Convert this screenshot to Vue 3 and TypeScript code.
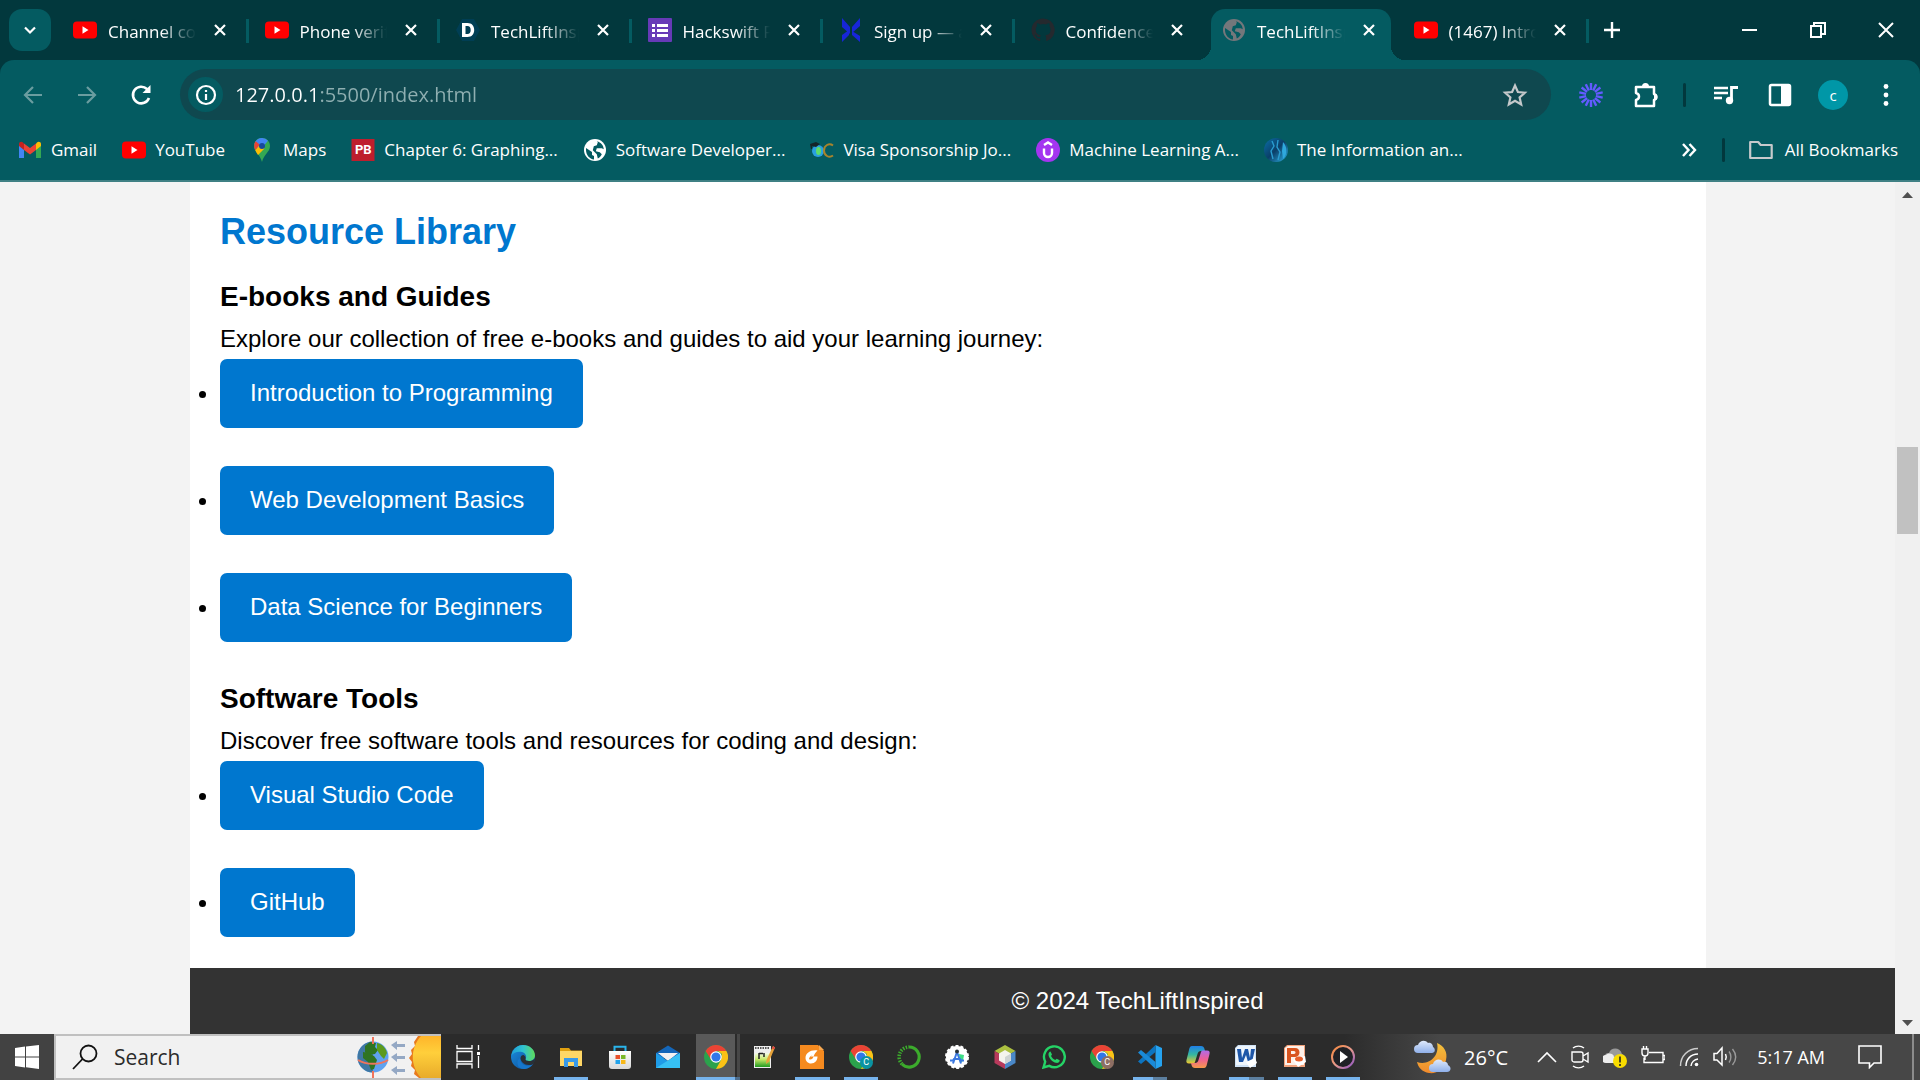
<script setup lang="ts">
import { ref } from 'vue'

interface Tab { icon: string; title: string; active?: boolean; bare?: boolean }
interface Bookmark { icon: string; label: string; letters?: string }
interface Section { title: string; intro: string; links: string[] }
interface App { icon: string; name: string; state?: 'open' | 'grouped' | 'current'; badge?: 'teal' | 'brown' }

const tabs: Tab[] = [
  { icon: 'youtube', title: 'Channel content' },
  { icon: 'youtube', title: 'Phone verification' },
  { icon: 'devpost', title: 'TechLiftInspired' },
  { icon: 'forms', title: 'Hackswift Form' },
  { icon: 'crossmark', title: 'Sign up — account' },
  { icon: 'github', title: 'Confidence-tech', bare: true },
  { icon: 'globe-dim', title: 'TechLiftInspired', active: true, bare: true },
  { icon: 'youtube', title: '(1467) Introduction' },
]

const bookmarks: Bookmark[] = [
  { icon: 'gmail', label: 'Gmail' },
  { icon: 'youtube', label: 'YouTube' },
  { icon: 'maps', label: 'Maps' },
  { icon: 'pb', label: 'Chapter 6: Graphing...', letters: 'PB' },
  { icon: 'globe', label: 'Software Developer...' },
  { icon: 'visa', label: 'Visa Sponsorship Jo...' },
  { icon: 'udemy', label: 'Machine Learning A...' },
  { icon: 'info-tech', label: 'The Information an...' },
]

const sections: Section[] = [
  {
    title: 'E-books and Guides',
    intro: 'Explore our collection of free e-books and guides to aid your learning journey:',
    links: ['Introduction to Programming', 'Web Development Basics', 'Data Science for Beginners'],
  },
  {
    title: 'Software Tools',
    intro: 'Discover free software tools and resources for coding and design:',
    links: ['Visual Studio Code', 'GitHub'],
  },
]

const apps: App[] = [
  { icon: 'edge', name: 'Edge' },
  { icon: 'explorer', name: 'File Explorer', state: 'open' },
  { icon: 'store', name: 'Store' },
  { icon: 'mail', name: 'Mail' },
  { icon: 'chrome', name: 'Chrome', state: 'current' },
  { icon: 'notepad', name: 'Notepad++' },
  { icon: 'foxit', name: 'PDF Reader', state: 'open' },
  { icon: 'chrome', name: 'Chrome profile', state: 'open', badge: 'teal' },
  { icon: 'anaconda', name: 'Anaconda' },
  { icon: 'studio', name: 'Android Studio' },
  { icon: 'netbeans', name: 'NetBeans' },
  { icon: 'whatsapp', name: 'WhatsApp' },
  { icon: 'chrome', name: 'Chrome second profile', badge: 'brown' },
  { icon: 'vscode', name: 'VS Code', state: 'grouped' },
  { icon: 'copilot', name: 'Copilot' },
  { icon: 'word', name: 'Word', state: 'grouped' },
  { icon: 'powerpoint', name: 'PowerPoint', state: 'open' },
  { icon: 'player', name: 'Media Player', state: 'open' },
]

const address = ref('127.0.0.1:5500/index.html')
const query = ref('')
</script>

<template>
  <div class="screen">
    <svg class="sprite" aria-hidden="true">
      <defs>
        <linearGradient id="edge-a" x1="0" y1="0" x2="1" y2="0"><stop offset="0" stop-color="#1f9fd8" /><stop offset=".5" stop-color="#30c2d0" /><stop offset="1" stop-color="#5fdc5a" /></linearGradient>
        <linearGradient id="edge-b" x1="0" y1="0" x2="1" y2="1"><stop offset="0" stop-color="#1b8fe0" /><stop offset="1" stop-color="#0c4a94" /></linearGradient>
        <linearGradient id="bag" x1="0" y1="0" x2="0" y2="1"><stop offset="0" stop-color="#fff" /><stop offset="1" stop-color="#d8d8d8" /></linearGradient>
        <linearGradient id="sun" x1="0" y1="0" x2="0" y2="1"><stop offset="0" stop-color="#ffb52a" /><stop offset=".4" stop-color="#ffcf3b" /><stop offset="1" stop-color="#e8ab2a" /></linearGradient>
        <linearGradient id="moon" x1="0" y1="0" x2="0" y2="1"><stop offset="0" stop-color="#f3c13c" /><stop offset="1" stop-color="#f08a2c" /></linearGradient>
        <linearGradient id="cloud" x1="0" y1="0" x2="0" y2="1"><stop offset="0" stop-color="#dfe9fb" /><stop offset="1" stop-color="#8fb0ea" /></linearGradient>
        <linearGradient id="ring" x1="0" y1="0" x2="1" y2="1"><stop offset="0" stop-color="#f5883c" /><stop offset=".5" stop-color="#e79a8a" /><stop offset="1" stop-color="#8a52c8" /></linearGradient>
        <linearGradient id="cop-a" x1="0" y1="0" x2="0" y2="1"><stop offset="0" stop-color="#1f7fe8" /><stop offset=".5" stop-color="#35b8a0" /><stop offset="1" stop-color="#f0c82c" /></linearGradient>
        <linearGradient id="cop-b" x1="0" y1="0" x2="0" y2="1"><stop offset="0" stop-color="#b06be8" /><stop offset=".5" stop-color="#ee5f95" /><stop offset="1" stop-color="#f79a4a" /></linearGradient>
        <linearGradient id="npp" x1="0" y1="0" x2="0" y2="1"><stop offset="0" stop-color="#f4faea" /><stop offset=".45" stop-color="#c8ea6a" /><stop offset="1" stop-color="#1f9a1f" /></linearGradient>
        <linearGradient id="orb" x1="0" y1="0" x2="1" y2="1"><stop offset="0" stop-color="#0a6fa8" /><stop offset=".5" stop-color="#0b3f68" /><stop offset="1" stop-color="#2fb4e8" /></linearGradient>
      </defs>
      <symbol id="youtube" viewBox="0 0 24 24"><rect y="3.5" width="24" height="17" rx="4" fill="#f00" /><path d="M9.5 8.3v7.4l6-3.7z" fill="#fff" /></symbol>
      <symbol id="devpost" viewBox="0 0 24 24"><path d="M6 1h12l6 11-6 11H6L0 12z" fill="#003e54" /><path fill-rule="evenodd" d="M6 5h5.500c4.300 0 6.700 2.800 6.700 7s-2.400 7-6.700 7H6zm3.500 3v8h2c2 0 3.200-1.500 3.200-4s-1.200-4-3.200-4z" fill="#fff" /></symbol>
      <symbol id="forms" viewBox="0 0 24 24"><rect width="24" height="24" rx="1" fill="#673ab7" /><path d="M4 6h3v3H4zm5 0h11v3H9zM4 11h3v3H4zm5 0h11v3H9zM4 16h3v3H4zm5 0h11v3H9z" fill="#fff" /></symbol>
      <symbol id="crossmark" viewBox="0 0 24 24"><path d="M3 0l8 9v7L3 9zM21 0v8l-8 7V9zM3 24v-7l7-5v5zM21 24l-8-7v-4l8 5z" fill="#1726d8" /></symbol>
      <symbol id="github" viewBox="0 0 24 24"><path d="M12 .5C5.600.5.500 5.700.500 12c0 5.100 3.300 9.400 7.900 10.900.600.100.800-.200.800-.5v-2c-3.200.7-3.900-1.500-3.900-1.500-.5-1.300-1.300-1.700-1.300-1.700-1-.7.100-.7.100-.7 1.200.1 1.800 1.200 1.800 1.200 1 1.800 2.700 1.300 3.400 1 .1-.8.400-1.300.7-1.600-2.600-.3-5.200-1.300-5.200-5.700 0-1.300.4-2.300 1.200-3.100-.1-.3-.5-1.500.1-3.100 0 0 1-.3 3.200 1.200a11 11 0 0 1 5.800 0c2.200-1.500 3.200-1.200 3.200-1.200.6 1.600.2 2.800.1 3.100.7.800 1.200 1.800 1.200 3.100 0 4.400-2.700 5.400-5.300 5.700.4.400.8 1.100.8 2.100v3.200c0 .3.200.7.800.5A11.500 11.500 0 0 0 12 .5z" fill="#24292e" /></symbol>
      <symbol id="globe" viewBox="0 0 24 24"><circle cx="12" cy="12" r="11" fill="#fff" /><path d="M3 10l6 4v3l2 1v3.500C6.500 21 3 17 3 12zM14 3.200c4 1 6.500 4.300 6.800 8l-2-1h-5l-1 3 4 1 2 2c-.8 2-2.200 3.300-4 4.200l-1-4.200-4-4 1-4 3-1 1-3z" fill="#045b61" /></symbol>
      <symbol id="globe-dim" viewBox="0 0 24 24"><circle cx="12" cy="12" r="11" fill="#74777b" /><path d="M3 10l6 4v3l2 1v3.500C6.500 21 3 17 3 12zM14 3.200c4 1 6.500 4.300 6.800 8l-2-1h-5l-1 3 4 1 2 2c-.8 2-2.200 3.300-4 4.200l-1-4.200-4-4 1-4 3-1 1-3z" fill="#045b61" /></symbol>
      <symbol id="gmail" viewBox="0 0 24 24"><path d="M1 6v14h5V11z" fill="#4285f4" /><path d="M18 11v9h5V6z" fill="#34a853" /><path d="M18 5.500V12l5-4V6c0-2-2.500-3-4-1.500z" fill="#fbbc04" /><path d="M1 6v2l5 4V5.500L5 4.500C3.500 3 1 4 1 6z" fill="#c5221f" /><path d="M6 5.500L12 10l6-4.500V12l-6 4.500L6 12z" fill="#ea4335" /></symbol>
      <symbol id="maps" viewBox="0 0 24 24"><path d="M12 0c4.500 0 8 3.500 8 8 0 6-6 8-8 16-2-8-8-10-8-16 0-4.500 3.500-8 8-8z" fill="#34a853" /><path d="M5.500 3.500A8 8 0 0 1 18 2.700L9.500 12.500 4.500 6z" fill="#4285f4" /><path d="M5.800 3.200l4 3.600-4.500 5.400C4 10 3.500 6 5.800 3.200z" fill="#ea4335" /><path d="M14.500 10.500L8 17c-1-1.700-2-3-2.700-4.800l4.500-5.300z" fill="#fbbc04" /><circle cx="12" cy="8" r="3" fill="#174a9c" /></symbol>
      <symbol id="pb" viewBox="0 0 24 24"><rect x=".5" y="1" width="23" height="22" fill="#be1e2d" /></symbol>
      <symbol id="visa" viewBox="0 0 24 24"><circle cx="8" cy="13" r="6" fill="#2a9fe0" /><ellipse cx="8.500" cy="13" rx="2.500" ry="4" fill="#5ddc6a" /><path d="M0 6l6-2 4 2-4 3-4-1v3H1z" fill="#152428" /><path d="M23 7.500c-4-3-9 0-9 5s5 8 9 5" fill="none" stroke="#a8842c" stroke-width="2" /></symbol>
      <symbol id="udemy" viewBox="0 0 24 24"><circle cx="12" cy="12" r="12" fill="#a435f0" /><path d="M8 10.500v4.500a4 4 0 0 0 8 0v-4.500M8 7L12 4.500 16 7" fill="none" stroke="#fff" stroke-width="2.400" /></symbol>
      <symbol id="info-tech" viewBox="0 0 24 24"><circle cx="12" cy="12" r="12" fill="url(#orb)" /><path d="M8 3l2 5-3 5 2 8M14 2l-1 7 3 5-2 8" fill="none" stroke="#2a9cd0" stroke-width="1.400" /><path d="M19 4c4 4 5 12 0 17l-1-8z" fill="#2fa8dc" /></symbol>
      <symbol id="x" viewBox="0 0 24 24"><path d="M7 7l10 10M17 7L7 17" stroke="#fff" stroke-width="2.200" /></symbol>

      <symbol id="edge" viewBox="0 0 24 24"><circle cx="12" cy="12" r="12" fill="url(#edge-b)" /><path d="M1 8C3 3 7 0 12 0c7 0 12 5 12 10.500 0 3.500-3 5.500-6 5.500-2.500 0-4-1-3.500-2 1.500-2 .5-6-3.500-7C6 6 2.500 8 .5 10.500z" fill="url(#edge-a)" /><path d="M9 13c0 5 4 8 9 7.500 2 0 3.500-1 4.500-2-2 3.500-6 5.500-10 5.500-4.500 0-6.500-4-6-7 .3-2 1.300-3.500 2.500-4z" fill="#1676cc" /><path d="M14.500 14c-.5 1 1 2 3.500 2s4-.5 6-2.500c-.3 2.500-1 4-1.500 5-1 1-2.500 1.500-4.500 1.500-5 0-8-3-8.500-6.500C9.500 11 11 10 12.500 10c1.500 1 2.500 2.500 2 4z" fill="#2a2f36" /></symbol>
      <symbol id="explorer" viewBox="0 0 24 24"><path d="M1 3h9l2 2.500h11v6H1z" fill="#e0a010" /><rect x="1" y="6" width="22" height="15" fill="#ffd766" /><path d="M5 22v-9h14v9h-4v-5H9v5z" fill="#3a9ae8" /></symbol>
      <symbol id="store" viewBox="0 0 24 24"><path d="M6.500 8V1.800h11V8" fill="none" stroke="#2ab4ea" stroke-width="2" /><path d="M1 6h22v15a3 3 0 0 1-3 3H4a3 3 0 0 1-3-3z" fill="url(#bag)" /><path d="M7.500 10H12v4H7.500z" fill="#e8502a" /><path d="M13 10h4.500v4H13z" fill="#7ab829" /><path d="M7.500 15H12v4H7.500z" fill="#22a2ea" /><path d="M13 15h4.500v4H13z" fill="#f8b818" /></symbol>
      <symbol id="mail" viewBox="0 0 24 24"><path d="M0 8l12-7.500L24 8v5H0z" fill="#1466b8" /><path d="M2 8h20l-10 8z" fill="#f2f2f2" /><path d="M0 8l12 8L24 8v15H0z" fill="#1f9ce8" /><path d="M0 23l24-15v15z" fill="#36c0f4" /></symbol>
      <symbol id="chrome" viewBox="0 0 24 24"><circle cx="12" cy="12" r="12" fill="#2ba24c" /><path d="M1.600 6A12 12 0 0 1 22.400 6H12L7 14.500z" fill="#ea4335" /><path d="M22.400 6A12 12 0 0 1 12 24l5-9 1-6-4-3z" fill="#fbc116" /><circle cx="12" cy="12" r="5.800" fill="#fff" /><circle cx="12" cy="12" r="4.600" fill="#3077e8" /></symbol>
      <symbol id="notepad" viewBox="0 0 24 24"><path d="M2 1h17v22H2z" fill="#eee" /><path d="M3 8h15v14H3z" fill="url(#npp)" /><path d="M3 3h15" stroke="#555" stroke-width="2" stroke-dasharray="1.500 1" /><path d="M7 14V8M7 8.500h4M12 8v4" stroke="#222" stroke-width="1.500" fill="none" /><path d="M21 1l2 1.500-6 14-3 2.500.5-4z" fill="#e8a33a" /><path d="M21 1l2 1.500-1 2-2-1z" fill="#d44" /></symbol>
      <symbol id="foxit" viewBox="0 0 24 24"><path d="M0 0h18l6 6v18H0z" fill="#f58a1f" /><path d="M19 0l5 5h-5z" fill="#f8a850" /><path fill-rule="evenodd" d="M17.500 5.500C11 4.500 5.500 8 5.500 13c0 3 2.500 5.500 5.500 5.500 4 0 6.500-3 6.500-7h-4c1-2.500 2-4 4-6zM12.500 10c-2 1-3.500 2.500-3.500 4 1.500 1.500 4 0 4.500-2.500h-3z" fill="#fff" /></symbol>
      <symbol id="anaconda" viewBox="0 0 24 24"><path d="M12 2A10 10 0 1 1 5 19" fill="none" stroke="#3cab2c" stroke-width="3.200" /><path d="M5 19A10 10 0 0 1 12 2" fill="none" stroke="#3cab2c" stroke-width="3.600" stroke-dasharray="1.500 1.300" /></symbol>
      <symbol id="studio" viewBox="0 0 24 24"><circle cx="12" cy="12" r="11" fill="#fff" stroke="#fff" stroke-width="2" stroke-dasharray="3 2" /><path d="M14 9l5 1-1 6-3 2z" fill="#3ddc84" /><path d="M5 15.500h3l1-1.500h6l1 1.500h3M12 7L8 18.500M12 7l4 11.500" stroke="#3b78e0" stroke-width="2" fill="none" /><circle cx="12" cy="6.500" r="2" fill="#263238" /></symbol>
      <symbol id="netbeans" viewBox="0 0 24 24"><path d="M12 0l10.500 6L12 12 1.500 6z" fill="#acc040" /><path d="M1.500 6L12 12v12L1.500 18z" fill="#b83a5c" /><path d="M22.500 6L12 12v12l10.500-6z" fill="#4a88c8" /><path d="M12 5l6 3.500v7L12 19l-6-3.500v-7z" fill="#f4f4ee" /><path d="M12 12l6-3.500v7L12 19z" fill="#cfd4d4" /></symbol>
      <symbol id="whatsapp" viewBox="0 0 24 24"><path d="M1.500 22.500l1.700-5.800A10.400 10.400 0 1 1 7.300 20.900z" fill="none" stroke="#25d366" stroke-width="2.400" /><path d="M8.500 6.500L10 9.500 9 11c1 2 2.500 3.300 4.200 4l1.500-1.300 3 1.500c0 2-1.700 3-3.700 2.600C10.500 17 7 13.500 6.500 10c-.2-2 1-3.500 2-3.500z" fill="#25d366" /></symbol>
      <symbol id="vscode" viewBox="0 0 24 24"><path d="M17.500 0L24 3v18l-6.500 3z" fill="#25a3f0" /><path d="M17.500 0v7L3 19l-3-2.500z" fill="#0c74c0" /><path d="M17.500 24v-7L3 5 0 7.500z" fill="#1a8ad8" /></symbol>
      <symbol id="copilot" viewBox="0 0 24 24"><path d="M6 1h9c2 0 3 1 3.500 3l.5 2h-4c-2 0-3 1-3.500 3L9 17c-.5 1-1 1.500-2 1.500H3C.5 18.500 0 17 .500 15L3 5c.5-2.500 1.300-4 3-4z" fill="url(#cop-a)" /><path d="M18 23H9c-2 0-3-1-3.500-3L5 18h4c2 0 3-1 3.500-3L15 7c.5-1 1-1.500 2-1.500h4c2.500 0 3 1.500 2.500 3.500L21 19c-.5 2.500-1.300 4-3 4z" fill="url(#cop-b)" /></symbol>
      <symbol id="word" viewBox="0 0 24 24"><path d="M1 3l3-3h18v22H1z" fill="#cfe2f6" /><path d="M2 3l3-2h16v19H2z" fill="#eef5fc" /><path d="M3 4h4l1 9 3-9h3l2 9 1-9h4l-3 13h-4l-2-7-3 7H5z" fill="#1d56a8" /><path d="M12 17l9-4 2 5-7 5z" fill="#fff" /></symbol>
      <symbol id="powerpoint" viewBox="0 0 24 24"><path d="M1 3l3-3h18v22H1z" fill="#f2a27c" /><path d="M2 3l3-2h16v19H2z" fill="#fdf0e8" /><path fill-rule="evenodd" d="M4 3h8c3 0 4.500 2 4.500 4.500S14.500 12 12 12H8v6H4zm4 3v3h3c2 0 2-3 0-3z" fill="#d9541e" /><path d="M10 15l12-4 1 6-8 5z" fill="#fff" /><ellipse cx="16" cy="14" rx="4" ry="2.500" fill="#e8602c" /></symbol>
      <symbol id="player" viewBox="0 0 24 24"><circle cx="12" cy="12" r="11" fill="#1f2126" stroke="url(#ring)" stroke-width="2" /><path d="M9 6v12l8-6z" fill="#fff" /></symbol>
    </svg>

    <header class="browser">
      <div class="tabstrip">
        <button class="tab-search" aria-label="Search tabs"><svg width="16" height="16" viewBox="0 0 16 16"><path d="M3 5.500l5 5 5-5" fill="none" stroke="#fff" stroke-width="2.200" /></svg></button>
        <nav class="tabs" aria-label="Tabs">
          <div v-for="(tab, i) in tabs" :key="i" class="tab" :class="{ bare: tab.bare }">
            <div class="tab-body" :class="{ active: tab.active }">
              <svg class="favicon"><use :href="'#' + tab.icon" /></svg>
              <span class="tab-title">{{ tab.title }}</span>
              <button class="close" aria-label="Close tab"><svg class="favicon"><use href="#x" /></svg></button>
            </div>
          </div>
        </nav>
        <button class="new-tab" aria-label="New tab"><svg width="24" height="24" viewBox="0 0 24 24"><path d="M12 4v16M4 12h16" stroke="#fff" stroke-width="2.400" /></svg></button>
        <div class="window-controls">
          <button aria-label="Minimize"><svg width="18" height="18" viewBox="0 0 18 18"><path d="M1 9h15" stroke="#fff" stroke-width="2" /></svg></button>
          <button aria-label="Restore"><svg width="18" height="18" viewBox="0 0 18 18"><path d="M2 5h10v11H2zM5 5V2h11v11h-4" fill="none" stroke="#fff" stroke-width="2" /></svg></button>
          <button aria-label="Close"><svg width="18" height="18" viewBox="0 0 18 18"><path d="M2 2l14 14M16 2L2 16" stroke="#fff" stroke-width="2" /></svg></button>
        </div>
      </div>

      <div class="chrome-body">
        <div class="toolbar">
          <div class="nav-buttons">
            <button aria-label="Back"><svg width="24" height="24" viewBox="0 0 24 24"><path d="M21 12H4M12 4l-8 8 8 8" fill="none" stroke="#6b9da0" stroke-width="2.200" /></svg></button>
            <button aria-label="Forward"><svg width="24" height="24" viewBox="0 0 24 24"><path d="M3 12h17M12 4l8 8-8 8" fill="none" stroke="#6b9da0" stroke-width="2.200" /></svg></button>
            <button aria-label="Reload"><svg width="24" height="24" viewBox="0 0 24 24"><path d="M20 15a8.300 8.300 0 1 1-2-9l2 2" fill="none" stroke="#fff" stroke-width="2.600" /><path d="M21.500 2v8h-8z" fill="#fff" /></svg></button>
          </div>
          <div class="address">
            <button class="site-info" aria-label="Site information"><svg width="24" height="24" viewBox="0 0 24 24"><circle cx="12" cy="12" r="9" fill="none" stroke="#fff" stroke-width="2.200" /><path d="M12 11v6M12 7v2" stroke="#fff" stroke-width="2.200" /></svg></button>
            <input v-model="address" class="url" aria-label="Address" spellcheck="false" />
            <button aria-label="Bookmark this tab"><svg width="26" height="26" viewBox="0 0 26 26"><path d="M13 3.500l2.900 6.500 7 .7-5.300 4.700 1.600 7-6.200-3.700-6.200 3.700 1.600-7L3.100 10.700l7-.7z" fill="none" stroke="#c4c8ca" stroke-width="2.200" /></svg></button>
          </div>
          <div class="actions">
            <button aria-label="Extension"><svg width="24" height="24" viewBox="-12 -12 24 24"><g stroke="#635bff" stroke-width="2.400"><path v-for="n in 14" :key="n" d="M0-5v-7" :transform="`rotate(${(n * 360) / 14})`" /></g></svg></button>
            <button aria-label="Extensions"><svg width="26" height="26" viewBox="0 0 26 26"><path d="M3 5h18v7c3 1 3 5 0 6v6H3v-6c4-1 4-6 0-7z" fill="none" stroke="#fff" stroke-width="2.500" stroke-linejoin="round" /><path d="M9 4.500a3.500 3.500 0 0 1 7 0zM21 11.500a3.500 3.500 0 0 1 0 7z" fill="#fff" /></svg></button>
            <i class="divider"></i>
            <button aria-label="Media controls"><svg width="26" height="26" viewBox="0 0 26 26"><path d="M1 6h14M1 11h14M1 16h8" stroke="#fff" stroke-width="2.400" /><path d="M18.500 18V5.500H25" fill="none" stroke="#fff" stroke-width="2.800" /><circle cx="16.500" cy="18.500" r="3.700" fill="#fff" /></svg></button>
            <button aria-label="Side panel"><svg width="26" height="26" viewBox="0 0 26 26"><rect x="2" y="3" width="20" height="20" rx="1.500" fill="none" stroke="#fff" stroke-width="2.500" /><path d="M13 3h9v20h-9z" fill="#fff" /></svg></button>
            <button class="avatar" aria-label="Profile">c</button>
            <button class="menu" aria-label="Menu"><svg width="24" height="24" viewBox="0 0 24 24"><g fill="#fff"><circle cx="12" cy="3.500" r="2.400" /><circle cx="12" cy="12" r="2.400" /><circle cx="12" cy="20.500" r="2.400" /></g></svg></button>
          </div>
        </div>

        <nav class="bookmarks" aria-label="Bookmarks">
          <a v-for="b in bookmarks" :key="b.label" href="#" class="bookmark">
            <span class="icon"><svg class="favicon"><use :href="'#' + b.icon" /></svg><b v-if="b.letters" class="letters">{{ b.letters }}</b></span>
            <span>{{ b.label }}</span>
          </a>
          <div class="bookmarks-end">
            <button aria-label="More bookmarks"><svg width="18" height="18" viewBox="0 0 18 18"><path d="M3 3l5.500 6L3 15M9.500 3l5.500 6-5.500 6" fill="none" stroke="#fff" stroke-width="2.400" /></svg></button>
            <i class="divider"></i>
            <a href="#" class="bookmark"><svg class="favicon" viewBox="0 0 24 24"><path d="M1.200 20V4h8l2.500 3h11v13z" fill="none" stroke="#c7cacc" stroke-width="2.200" stroke-linejoin="round" /></svg><span>All Bookmarks</span></a>
          </div>
        </nav>
      </div>
    </header>

    <div class="viewport">
      <div class="page">
        <main class="library">
          <h2>Resource Library</h2>
          <section v-for="s in sections" :key="s.title">
            <h3>{{ s.title }}</h3>
            <p>{{ s.intro }}</p>
            <ul>
              <li v-for="l in s.links" :key="l"><a href="#" class="resource">{{ l }}</a></li>
            </ul>
          </section>
        </main>
        <footer class="site-footer">© 2024 TechLiftInspired</footer>
      </div>
      <div class="scrollbar">
        <svg width="11" height="6" viewBox="0 0 11 6"><path d="M0 6h11L5.500 0z" fill="#505050" /></svg>
        <div class="track"><div class="thumb"></div></div>
        <svg width="11" height="6" viewBox="0 0 11 6"><path d="M0 0h11L5.500 6z" fill="#505050" /></svg>
      </div>
    </div>

    <footer class="taskbar">
      <button class="start" aria-label="Start"><svg width="24" height="24" viewBox="0 0 24 24"><path d="M0 3l10-1.500v10H0zM11 1.400L24 0v11.500H11zM0 12.500h10v10L0 21zM11 12.500h13V24l-13-1.700z" fill="#fff" /></svg></button>
      <label class="search">
        <svg width="26" height="26" viewBox="0 0 26 26"><circle cx="16.500" cy="9.500" r="8" fill="none" stroke="#111" stroke-width="1.800" /><path d="M10.500 15L1 25" stroke="#111" stroke-width="1.800" /></svg>
        <input v-model="query" placeholder="Search" aria-label="Search" />
        <svg class="highlight" width="84" height="42" viewBox="0 0 84 42">
          <circle cx="16" cy="21" r="15.500" fill="#5fa2f0" /><path d="M16 5.500a15.500 15.500 0 0 0 0 31z" fill="#3f78a4" />
          <path d="M8 10l5-4 6 1-1 4 3 3-3 4-6 1-4-3zM6 16l5 1 6 3 3 4-3 9-3 1-3-8-5-4z" fill="#2f7422" /><path d="M20 7c5 1 9 5 10 10l-3 6-3-3-4-6z" fill="#5c9a1e" />
          <path d="M1 24c8 5 22 5 30 0M16 1v7M16 35v7" fill="none" stroke="#f0745c" stroke-width="2" />
          <path d="M34 9l6-4v3h8v3h-8v3zM34 21l6-4v3h8v3h-8v3zM34 34l6-4v3h8v3h-8v3z" fill="#94a8c4" />
          <path d="M61 0l-4 6 1 4-4 4 1 4-3 4 3 4-1 4 4 4-1 4 5 4h22V0z" fill="#e8791c" /><path d="M84 0H64c-11 12-11 30 0 42h20z" fill="url(#sun)" />
        </svg>
      </label>
      <button class="task-view" aria-label="Task view"><svg width="24" height="24" viewBox="0 0 24 24"><path d="M1 0v3.500h15V0M1 6.500h15v10H1zM1 23.500V19h15v4.500M22.500 0v5M22.500 11v12" fill="none" stroke="#fff" stroke-width="1.300" /><path d="M21 7h3v3h-3z" fill="#fff" /></svg></button>
      <nav class="apps" aria-label="Applications">
        <button v-for="a in apps" :key="a.name" class="app" :class="a.state" :aria-label="a.name">
          <span class="icon"><svg class="favicon"><use :href="'#' + a.icon" /></svg><span v-if="a.badge" class="badge" :class="a.badge">C</span></span>
        </button>
      </nav>
      <div class="tray">
        <button class="weather"><svg width="38" height="36" viewBox="0 0 38 36"><path d="M23 4c7 3 11 9 9 17-2 9-9 14-17 13C8 33 4 28 3 23c12 4 23-6 20-19z" fill="url(#moon)" /><path d="M4 14a4 4 0 0 1 0-8c1-4 7-6 10-2 3-1 5 2 5 4 3 2 2 6-1 6z" fill="url(#cloud)" /><path d="M19 33a4 4 0 0 1 0-8c1-5 8-6 10-2 3-1 5 1 5 3 4 2 3 7-1 7z" fill="url(#cloud)" /></svg>26°C</button>
        <div class="status">
          <button aria-label="Show hidden icons"><svg width="20" height="24" viewBox="0 0 20 24"><path d="M1 17l9-9 9 9" fill="none" stroke="#fff" stroke-width="1.600" /></svg></button>
          <button aria-label="Meet now"><svg width="18" height="24" viewBox="0 0 18 24"><path d="M2 7h8c1 0 2 1 2 2v6c0 1-1 2-2 2H3c-1 0-2-1-2-2V7zM12 11l5-3v9l-5-3M2 3c3-2.500 8-2.500 11 0M2 21c3 2.500 8 2.500 11 0" fill="none" stroke="#fff" stroke-width="1.400" /></svg></button>
          <button aria-label="Cloud sync"><svg width="24" height="24" viewBox="0 0 24 24"><path d="M3 17a4 4 0 0 1-1-7c1-2 3-2 4-2 2-6 11-6 13 1 3 1 4 3 4 5l-4 5z" fill="#9a9a9a" /><path d="M3 18a4 4 0 0 1 0-8c3-3 8-1 8 2 3 0 4 2 4 3v3z" fill="#ededed" /><circle cx="17" cy="16" r="7" fill="#f8dc00" /><path d="M17 11.500v6M17 19v2" stroke="#222" stroke-width="1.600" /></svg></button>
          <button aria-label="Battery"><svg width="24" height="24" viewBox="0 0 24 24"><path d="M8 7.500h14v10H3v-5M22 10.500h2v4h-2M1 4h6v4a3 3 0 0 1-6 0zM2.500 4V1M5.500 4V1M4 11v4" fill="none" stroke="#fff" stroke-width="1.400" /></svg></button>
          <button aria-label="Network"><svg width="20" height="24" viewBox="0 0 20 24"><path d="M12 21a8 8 0 0 1 7-7M7 21c0-7 5-12 12-12" fill="none" stroke="#fff" stroke-width="1.500" /><path d="M1.500 21C1.500 11 9 3.500 19 3.500" fill="none" stroke="#ccc" stroke-width="1.500" /><circle cx="17.500" cy="19.500" r="1.800" fill="#fff" /></svg></button>
          <button aria-label="Volume"><svg width="24" height="24" viewBox="0 0 24 24"><path d="M1 8.500h3L9 3v17l-5-5H1zM12.500 9c1 2 1 4 0 6" fill="none" stroke="#fff" stroke-width="1.500" /><path d="M16 6.500c2.500 3 2.500 8 0 11M19.500 4c4 5 4 11 0 16" fill="none" stroke="#9a9a9a" stroke-width="1.400" /></svg></button>
        </div>
        <time class="clock">5:17 AM</time>
        <button class="notify" aria-label="Notifications"><svg width="24" height="24" viewBox="0 0 24 24"><path d="M1 1h22v17h-7l-4.500 4.500V18H1z" fill="none" stroke="#fff" stroke-width="1.600" /></svg></button>
      </div>
    </footer>
  </div>
</template>

<style>
body {
  margin: 0;
}
</style>

<style scoped>
* {
  box-sizing: border-box;
}
.screen {
  display: flex;
  flex-direction: column;
  min-height: 100vh;
  font-family: "Open Sans", "Noto Sans", sans-serif;
  font-size: 17px;
  color: #fff;
}
.sprite {
  position: absolute;
  width: 0;
  height: 0;
}
svg {
  display: block;
  flex: none;
}
button {
  display: flex;
  align-items: center;
  justify-content: center;
  padding: 0;
  border: 0;
  background: none;
  color: inherit;
  font: inherit;
}
a {
  color: inherit;
  text-decoration: none;
}
.favicon {
  width: 24px;
  height: 24px;
}
.icon {
  position: relative;
  flex: none;
}
.letters {
  position: absolute;
  inset: 0;
  font: 700 13px/24px Roboto, sans-serif;
  text-align: center;
}
.badge {
  position: absolute;
  right: 0;
  bottom: 0;
  width: 13px;
  height: 13px;
  border-radius: 7px;
  font: 9px/13px Roboto, sans-serif;
  text-align: center;
}
.badge.teal {
  background: #0a93a2;
}
.badge.brown {
  background: #8d6e63;
}

/* Browser frame */
.browser {
  background: #02383d;
}
.tabstrip {
  display: flex;
  align-items: center;
  height: 60px;
}
.tab-search {
  flex: none;
  width: 42px;
  height: 42px;
  margin: 0 5px 0 9px;
  border-radius: 13px;
  background: #045b61;
}
.tabs {
  flex: 0 1 1532px;
  display: flex;
  align-self: stretch;
  min-width: 0;
}
.tab {
  position: relative;
  flex: 1;
  min-width: 0;
  padding: 9px 6px 0;
}
.tab::after {
  content: "";
  position: absolute;
  right: -1px;
  top: 19px;
  width: 3px;
  height: 24px;
  background: #045b61;
}
.tab.bare::after {
  display: none;
}
.tab-body {
  position: relative;
  display: flex;
  align-items: center;
  height: 51px;
  padding: 0 10px 9px 11px;
}
.tab-body.active {
  border-radius: 14px 14px 0 0;
  background: #045b61;
}
.tab-body.active::before,
.tab-body.active::after {
  content: "";
  position: absolute;
  bottom: 0;
  width: 14px;
  height: 14px;
}
.tab-body.active::before {
  left: -14px;
  background: radial-gradient(circle at 0 0, transparent 14px, #045b61 14px);
}
.tab-body.active::after {
  right: -14px;
  background: radial-gradient(circle at 100% 0, transparent 14px, #045b61 14px);
}
.tab-title {
  flex: 1;
  min-width: 0;
  margin: 2px 12px 0 11px;
  overflow: hidden;
  white-space: nowrap;
  mask-image: linear-gradient(to right, #000 60%, transparent);
}
.new-tab {
  flex: none;
  width: 48px;
}
.window-controls {
  display: flex;
  margin-left: auto;
}
.window-controls button {
  width: 68px;
  height: 60px;
}
.chrome-body {
  display: flex;
  flex-direction: column;
  padding: 9px 0 0;
  border-bottom: 2px solid #3f8084;
  border-radius: 14px 14px 0 0;
  background: #045b61;
}
.toolbar {
  display: flex;
  height: 51px;
}
.nav-buttons {
  display: flex;
  padding: 0 12px 0 6px;
}
.nav-buttons button {
  width: 54px;
}
.address {
  flex: 1;
  display: flex;
  align-items: center;
  padding: 0 23px 0 8px;
  border-radius: 26px;
  background: #0f484f;
}
.site-info {
  width: 35px;
  height: 35px;
  border-radius: 18px;
  background: #045b61;
}
.url {
  flex: 1;
  min-width: 0;
  padding: 0;
  margin: 0 14px 0 12px;
  border: 0;
  outline: 0;
  font: inherit;
  font-size: 20px;
  color: transparent;
  background: linear-gradient(to right, #fff 84px, #8fafb1 84px);
  background-clip: text;
}
.actions {
  display: flex;
  align-items: center;
  padding-left: 12px;
}
.actions button {
  width: 55px;
}
.divider {
  flex: none;
  width: 3px;
  height: 24px;
  border-radius: 2px;
  background: #02383d;
}
.actions .divider {
  margin: 0 12px 0 10px;
}
.actions .avatar {
  width: 30px;
  height: 30px;
  margin: 0 10px;
  border-radius: 15px;
  background: #0097a7;
  font-size: 15px;
}
.actions .menu {
  margin-right: 7px;
}
.bookmarks {
  display: flex;
  align-items: center;
  height: 60px;
  gap: 25px;
  padding: 0 22px 0 18px;
}
.bookmark {
  display: flex;
  align-items: center;
  gap: 9px;
  white-space: nowrap;
}
.bookmark > span:last-child {
  padding-bottom: 2px;
}
.bookmarks-end {
  display: flex;
  align-items: center;
  gap: 24px;
  margin-left: auto;
}
.bookmarks-end .bookmark {
  gap: 12px;
}

/* Web page */
.viewport {
  flex: 1;
  display: flex;
  font-family: "Liberation Sans", Arial, sans-serif;
  font-size: 24px;
  line-height: 38px;
  color: #000;
  background: #f3f3f3;
}
.page {
  flex: 1;
  display: flex;
  flex-direction: column;
  padding-left: 190px;
}
.library {
  flex: 1;
  margin-right: 189px;
  padding: 21px 30px 30px;
  background: #fff;
}
h2 {
  margin: 0 0 13px;
  font-size: 36px;
  line-height: 58px;
  color: #0077cf;
}
section + section {
  margin-top: 34px;
}
h3 {
  margin: 0;
  font-size: 28px;
  line-height: 46px;
}
p {
  margin: 0 0 1px;
}
ul {
  display: flex;
  flex-direction: column;
  gap: 38px;
  margin: 0;
  padding: 0;
}
li {
  height: 69px;
}
.resource {
  display: inline-block;
  height: 69px;
  padding: 15px 30px;
  border-radius: 7px;
  color: #fff;
  background: #0077cf;
}
.site-footer {
  height: 66px;
  padding: 14px 0 14px 190px;
  text-align: center;
  color: #fff;
  background: #333;
}
.scrollbar {
  display: flex;
  flex-direction: column;
  align-items: center;
  width: 25px;
  padding: 10px 2px 8px;
  background: #f0f0f0;
}
.track {
  flex: 1;
  display: flex;
  flex-direction: column;
  align-self: stretch;
}
.track::before {
  content: "";
  flex: 249;
}
.track::after {
  content: "";
  flex: 486;
}
.thumb {
  flex: 87;
  background: #c1c1c1;
}

/* Taskbar */
.taskbar {
  display: flex;
  height: 46px;
  font-size: 20px;
  background: linear-gradient(to right, #2b2b2b 70%, #474747 75%);
}
.start {
  width: 54px;
  background: #424242;
}
.search {
  display: flex;
  align-items: center;
  width: 387px;
  padding-left: 16px;
  border: 2px solid #c0c0c0;
  border-right: 0;
  background: #f1f1f1;
}
.search input {
  flex: 1;
  min-width: 0;
  margin-left: 16px;
  padding: 0;
  border: 0;
  outline: 0;
  background: none;
  font: inherit;
  font-size: 21px;
  color: #222;
}
.search input::placeholder {
  color: #2b2b2b;
}
.task-view {
  width: 58px;
  padding-right: 4px;
}
.apps {
  flex: 0 1 868px;
  display: flex;
}
.app {
  position: relative;
  flex: 1;
}
.app::after {
  position: absolute;
  left: 7px;
  right: 7px;
  bottom: 0;
  height: 3px;
  background: #76b3ec;
}
.app.open::after,
.app.grouped::after,
.app.current::after {
  content: "";
}
.app.grouped::after {
  background: linear-gradient(to right, #76b3ec 20px, #5c7f9f 20px);
}
.app.current {
  background: linear-gradient(to right, transparent 4px, #595959 4px, #595959 43px, #2b2b2b 43px, #2b2b2b 45px, #474747 45px);
}
.app.current::after {
  left: 4px;
  right: 0;
  background: linear-gradient(to right, #76b3ec 39px, #4d6d8c 39px);
}
.tray {
  flex: 1;
  display: flex;
  align-items: center;
  justify-content: flex-end;
  margin-right: 6px;
  border-right: 2px solid #8c8c8c;
  white-space: nowrap;
}
.weather {
  gap: 12px;
  margin-right: 29px;
}
.status {
  display: flex;
  align-items: center;
  gap: 14px;
}
.clock {
  margin: 0 33px 0 20px;
  font-size: 18px;
}
.notify {
  margin-right: 30px;
}
</style>
